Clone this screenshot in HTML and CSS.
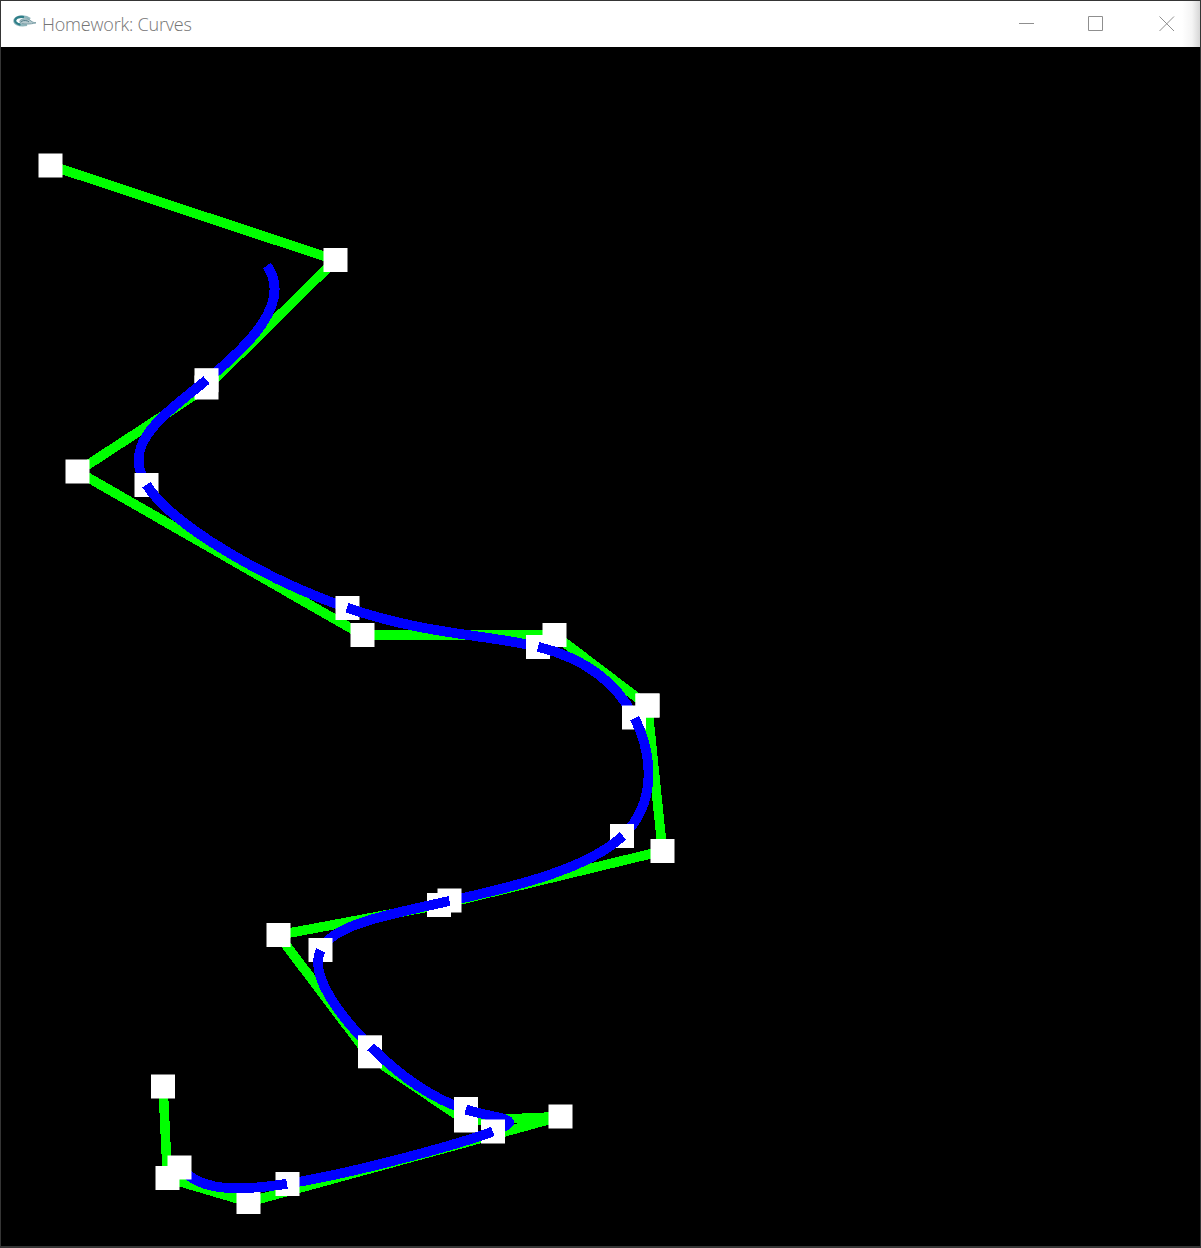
FILE: index.html
```html
<!DOCTYPE html>
<html lang="en">
<head>
<meta charset="utf-8">
<title>Homework: Curves</title>
<link rel="stylesheet" href="styles.css">
</head>
<body>
<div class="window">
  <header class="titlebar">
    <svg class="app-icon" width="24" height="14" viewBox="0 0 24 14" aria-hidden="true">
      <path d="M17 4C13 .8 4.500 .8 2 4.500C0 8 5 11.300 14 9.800" fill="none" stroke="#8fb6bc" stroke-width="2.600"/>
      <path d="M11 2.200C7 1.500 3.300 2.500 2.300 4.800C1.500 7 4 8.800 7.500 9.600" fill="none" stroke="#2f7f89" stroke-width="2.200"/>
      <path d="M7 5.500C10 3 16 3.500 18 6C20 7.500 21 7.500 23 7.800C17 9.500 10 9.500 7 7.500Z" fill="#b5c9ce" stroke="#7b9fa7" stroke-width="1"/>
      <path d="M8 6.500C11 4.800 15 5.500 16 7" fill="none" stroke="#527d88" stroke-width="1"/>
    </svg>
    <h1 class="title">Homework: Curves</h1>
    <div class="controls">
      <svg width="16" height="16" viewBox="0 0 16 16"><path d="M0 7.500H15"/></svg>
      <svg width="16" height="16" viewBox="0 0 16 16"><path d="M.5.5H14.500V14.500H.5Z"/></svg>
      <svg class="close" width="16" height="16" viewBox="0 0 16 16"><path d="M.5.5L15 15M15 .5L.5 15"/></svg>
    </div>
  </header>
  <main class="viewport">
    <svg class="scene" width="1199" height="1199" viewBox="1 47 1199 1199">
      <defs><rect id="pt" class="point" x="-12" y="-12" width="24" height="24"/></defs>
      <g class="hull">
        <path d="M50.500 165.500L335.500 260"/><path d="M335.500 260L206.500 387.300"/>
        <path d="M206.500 387.300L77.500 471.500"/><path d="M77.500 471.500L362.500 635"/>
        <path d="M362.500 635H554.500"/><path d="M554.500 635L647.500 705.500"/>
        <path d="M647.500 705.500L662.500 851"/><path d="M662.500 851L439 905"/>
        <path d="M439 905L278.500 935"/><path d="M278.500 935L370 1056.300"/>
        <path d="M370 1056.300L466 1121"/><path d="M466 1121L560.500 1116.500"/>
        <path d="M560.500 1116.500L248.500 1202"/><path d="M248.500 1202L167.500 1178"/>
        <path d="M167.500 1178L163 1086.500"/>
      </g>
      <g>
        <use href="#pt" x="50.500" y="165.500"/><use href="#pt" x="335.500" y="260"/>
        <use href="#pt" x="206.500" y="387.500"/><use href="#pt" x="77.500" y="471.500"/>
        <use href="#pt" x="362.500" y="635"/><use href="#pt" x="554.500" y="635"/>
        <use href="#pt" x="647.500" y="705.500"/><use href="#pt" x="662.500" y="851"/>
        <use href="#pt" x="439" y="905"/><use href="#pt" x="278.500" y="935"/>
        <use href="#pt" x="370" y="1056.300"/><use href="#pt" x="466" y="1120.500"/>
        <use href="#pt" x="560.500" y="1116.500"/><use href="#pt" x="248.500" y="1202"/>
        <use href="#pt" x="167.500" y="1178"/><use href="#pt" x="163" y="1086.500"/>
      </g>
      <g class="spline">
        <path d="M267 265.500C292.500 302.400 249.500 344.900 206.500 380"/><use href="#pt" x="206.500" y="380.200"/>
        <path d="M206.500 380C163.500 415.400 120.500 443.400 146.500 484.700"/><use href="#pt" x="146.500" y="485"/>
        <path d="M146.500 484.700C172.500 526 267.500 580.500 347 607.800"/><use href="#pt" x="347.500" y="608"/>
        <path d="M347 607.800C426.500 635 490.500 635 538 646.800"/><use href="#pt" x="538" y="647"/>
        <path d="M538 646.800C585.500 658.500 616.500 682 634.600 718"/><use href="#pt" x="634" y="717.500"/>
        <use href="#pt" x="647.500" y="705.500"/>
        <path d="M634.600 718C652.500 754 657.500 802.500 622.800 835.800"/><use href="#pt" x="622" y="836"/>
        <path d="M622.800 835.800C588 869 513.500 887 449.500 901"/><use href="#pt" x="449.500" y="900.500"/>
        <path d="M449.500 901C385.500 915 332 925 320.500 950.200"/><use href="#pt" x="320.500" y="950"/>
        <path d="M320.500 950.200C309 975.400 339.500 1015.900 370.800 1046.900"/><use href="#pt" x="370" y="1047.300"/>
        <path d="M370.800 1046.900C402 1077.900 434 1099.400 465.800 1109.500"/><use href="#pt" x="466" y="1109"/>
        <path d="M465.800 1109.500C497.500 1119.500 529 1118 492.800 1131.500"/><use href="#pt" x="493" y="1131.500"/>
        <path d="M492.800 1131.500C456.500 1145 352.500 1173.500 287 1183.800"/><use href="#pt" x="287.500" y="1184"/>
        <path d="M287 1183.800C221.500 1194 194.500 1186 180.300 1166.800"/><use href="#pt" x="179.500" y="1167.500"/>
      </g>
    </svg>
  </main>
</div>
</body>
</html>
```
FILE: styles.css
```css
* { box-sizing: border-box; }
body { margin: 0; background: #000; }
.window {
  display: flex;
  flex-direction: column;
  width: 1201px;
  height: 1248px;
  border: 1px solid #353535;
  border-bottom-width: 2px;
  overflow: hidden;
}
.titlebar {
  display: flex;
  align-items: center;
  flex: 0 0 46px;
  padding: 0 25px 0 12px;
  background: linear-gradient(to left, #d6d6d6, #f4f4f4 8px, #fff 18px);
}
.app-icon { margin-top: -4px; }
.title {
  margin: -1px 0 0 5px;
  font: 300 18px/24px "Open Sans", sans-serif;
  letter-spacing: -0.2px;
  color: #757575;
  white-space: nowrap;
}
.controls {
  display: flex;
  gap: 53px;
  margin-left: auto;
}
.controls svg {
  display: block;
  fill: none;
  stroke: #8f8f8f;
  stroke-width: 1;
}
.controls .close { margin-left: 2px; }
.viewport { flex: 1; background: #000; }
.scene { display: block; }
.hull, .spline { fill: none; shape-rendering: crispEdges; }
.hull { stroke: #0f0; stroke-width: 9.6; }
.spline { stroke: #00f; stroke-width: 9.8; }
.point { fill: #fff; stroke: none; shape-rendering: geometricPrecision; }
```
